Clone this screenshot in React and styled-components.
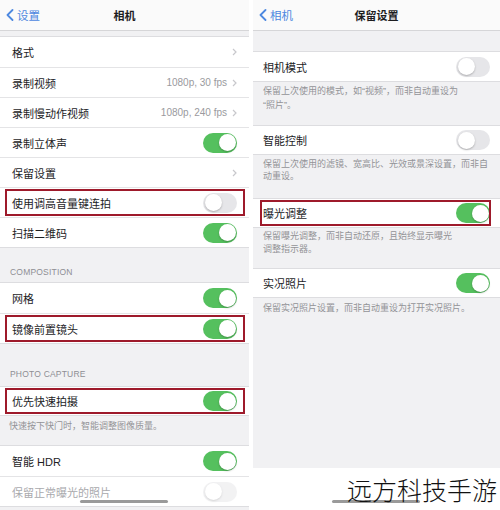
import React from "react";
import styled, { createGlobalStyle } from "styled-components";

const GlobalStyle = createGlobalStyle`
  html, body {
    margin: 0;
    padding: 0;
    background: #fff;
  }
  body {
    font-family: "Liberation Sans", "Noto Sans CJK SC", sans-serif;
    -webkit-font-smoothing: antialiased;
  }
`;

const Page = styled.div`
  position: relative;
  width: 500px;
  height: 510px;
  display: flex;
  gap: 4px;
  overflow: hidden;
  background: #fff;
`;

const Panel = styled.div`
  position: relative;
  width: ${(p) => p.$width}px;
  height: ${(p) => p.$height}px;
  flex-shrink: 0;
  display: flex;
  flex-direction: column;
  background: #f1f1f3;
  overflow: hidden;
`;

const NavBar = styled.div`
  height: 30px;
  flex-shrink: 0;
  display: grid;
  grid-template-columns: 1fr auto 1fr;
  align-items: center;
  padding: 0 6px;
  background: #fafafa;
  border-bottom: 1px solid #d6d6d8;
`;

const Back = styled.div`
  display: flex;
  align-items: center;
  gap: 3px;
  color: #4d88e0;
  font-size: 11.5px;
`;

const Title = styled.div`
  font-size: 11px;
  font-weight: 600;
  color: #1d1d1f;
`;

const Band = styled.div`
  height: ${(p) => p.$height}px;
  flex-shrink: 0;
`;

const Group = styled.div`
  background: #fff;
  border-top: 1px solid #dddde0;
  border-bottom: 1px solid #dddde0;
  flex-shrink: 0;
`;

const Row = styled.div`
  position: relative;
  height: ${(p) => p.$height || 30}px;
  display: flex;
  align-items: center;
  padding: 0 ${(p) => p.$pad}px;
  background: #fff;
  box-sizing: border-box;
  & + & {
    border-top: 1px solid #e4e4e6;
  }
  ${(p) =>
    p.$mark &&
    `
    &::after {
      content: "";
      position: absolute;
      top: 1px;
      bottom: 1px;
      left: ${p.$mark[0]}px;
      right: ${p.$mark[1]}px;
      border: 2px solid #9e1a2b;
    }
  `}
`;

const Label = styled.div`
  flex: 1;
  font-size: 11px;
  color: ${(p) => (p.$dim ? "#a9a9ad" : "#1d1d1f")};
  white-space: nowrap;
`;

const Value = styled.div`
  font-size: 10px;
  color: #9a9a9e;
  margin-right: 5px;
`;

const Track = styled.div`
  width: 34px;
  height: 20px;
  border-radius: 10px;
  box-sizing: border-box;
  background: ${(p) => (p.$on ? "#55c05e" : "#e6e6e9")};
  opacity: ${(p) => (p.$dim ? 0.5 : 1)};
  display: flex;
  justify-content: ${(p) => (p.$on ? "flex-end" : "flex-start")};
  padding: 1.5px;
`;

const Knob = styled.div`
  width: 17px;
  height: 17px;
  border-radius: 50%;
  background: #fff;
  box-shadow: 0 1px 2px rgba(0, 0, 0, 0.25);
`;

const SectionHeader = styled.div`
  height: ${(p) => p.$height}px;
  flex-shrink: 0;
  display: flex;
  align-items: flex-end;
  box-sizing: border-box;
  padding: 0 10px ${(p) => p.$bottom}px;
  font-size: 8.5px;
  letter-spacing: 0.2px;
  color: #8e8e93;
`;

const Footnote = styled.div`
  height: ${(p) => p.$height}px;
  flex-shrink: 0;
  box-sizing: border-box;
  padding: ${(p) => p.$top}px ${(p) => p.$pad}px 0;
  font-size: 9px;
  line-height: ${(p) => p.$line || 13}px;
  color: #939397;
`;

const HomeBar = styled.div`
  position: absolute;
  left: ${(p) => p.$left}px;
  top: 500px;
  width: 88px;
  height: 3px;
  border-radius: 2px;
  background: #9a9a9a;
`;

const Watermark = styled.div`
  position: absolute;
  left: 347px;
  top: 473px;
  font-family: "Noto Sans CJK SC", sans-serif;
  font-weight: 300;
  font-size: 25px;
  line-height: 32px;
  color: #111;
  white-space: nowrap;
`;

const BackChevron = () => (
  <svg width="8" height="12" viewBox="0 0 8 12">
    <path d="M6.5 1 L1.5 6 L6.5 11" fill="none" stroke="#4d88e0" strokeWidth="1.8" strokeLinecap="round" strokeLinejoin="round" />
  </svg>
);

const Chevron = () => (
  <svg width="5" height="8" viewBox="0 0 5 8">
    <path d="M1 1 L4 4 L1 7" fill="none" stroke="#c8c8cc" strokeWidth="1.2" />
  </svg>
);

const Toggle = ({ on, dim }) => (
  <Track $on={on} $dim={dim}>
    <Knob />
  </Track>
);

const SettingRow = ({ label, value, chevron, toggle, on, dim, mark, pad, height }) => (
  <Row $mark={mark} $pad={pad} $height={height}>
    <Label $dim={dim}>{label}</Label>
    {value && <Value>{value}</Value>}
    {chevron && <Chevron />}
    {toggle && <Toggle on={on} dim={dim} />}
  </Row>
);

const L = 12;
const R = 10;

export default function App() {
  return (
    <>
      <GlobalStyle />
      <Page>
        <Panel $width={249} $height={510}>
          <NavBar>
            <Back>
              <BackChevron />
              设置
            </Back>
            <Title>相机</Title>
            <div />
          </NavBar>
          <Band $height={5} />
          <Group>
            <SettingRow pad={L} label="格式" chevron />
            <SettingRow pad={L} label="录制视频" value="1080p, 30 fps" chevron />
            <SettingRow pad={L} label="录制慢动作视频" value="1080p, 240 fps" chevron />
            <SettingRow pad={L} label="录制立体声" toggle on />
            <SettingRow pad={L} label="保留设置" chevron />
            <SettingRow pad={L} label="使用调高音量键连拍" toggle mark={[5, 4]} />
            <SettingRow pad={L} label="扫描二维码" toggle on />
          </Group>
          <SectionHeader $height={34} $bottom={5}>COMPOSITION</SectionHeader>
          <Group>
            <SettingRow pad={L} label="网格" toggle on />
            <SettingRow pad={L} label="镜像前置镜头" toggle on mark={[5, 4]} />
          </Group>
          <SectionHeader $height={42} $bottom={7}>PHOTO CAPTURE</SectionHeader>
          <Group>
            <SettingRow pad={L} label="优先快速拍摄" toggle on mark={[5, 4]} height={28} />
          </Group>
          <Footnote $height={29} $top={4} $pad={9}>
            快速按下快门时，智能调整图像质量。
          </Footnote>
          <Group>
            <SettingRow pad={L} label="智能 HDR" toggle on />
            <SettingRow pad={L} label="保留正常曝光的照片" toggle dim />
          </Group>
        </Panel>

        <Panel $width={247} $height={468}>
          <NavBar>
            <Back>
              <BackChevron />
              相机
            </Back>
            <Title>保留设置</Title>
            <div />
          </NavBar>
          <Band $height={20} />
          <Group>
            <SettingRow pad={R} label="相机模式" toggle height={29} />
          </Group>
          <Footnote $height={43} $top={2} $pad={R} $line={14}>
            保留上次使用的模式，如“视频”，而非自动重设为
            <br />
            “照片”。
          </Footnote>
          <Group>
            <SettingRow pad={R} label="智能控制" toggle height={28} />
          </Group>
          <Footnote $height={43} $top={3} $pad={R} $line={12}>
            保留上次使用的滤镜、宽高比、光效或景深设置，而非自
            <br />
            动重设。
          </Footnote>
          <Group>
            <SettingRow pad={R} label="曝光调整" toggle on mark={[7, 9]} height={28} />
          </Group>
          <Footnote $height={40} $top={2} $pad={R} $line={13}>
            保留曝光调整，而非自动还原，且始终显示曝光
            <br />
            调整指示器。
          </Footnote>
          <Group>
            <SettingRow pad={R} label="实况照片" toggle on height={28} />
          </Group>
          <Footnote $height={170} $top={4} $pad={R}>
            保留实况照片设置，而非自动重设为打开实况照片。
          </Footnote>
        </Panel>
        <HomeBar $left={80} />
        <HomeBar $left={332} />
        <Watermark>远方科技手游</Watermark>
      </Page>
    </>
  );
}
